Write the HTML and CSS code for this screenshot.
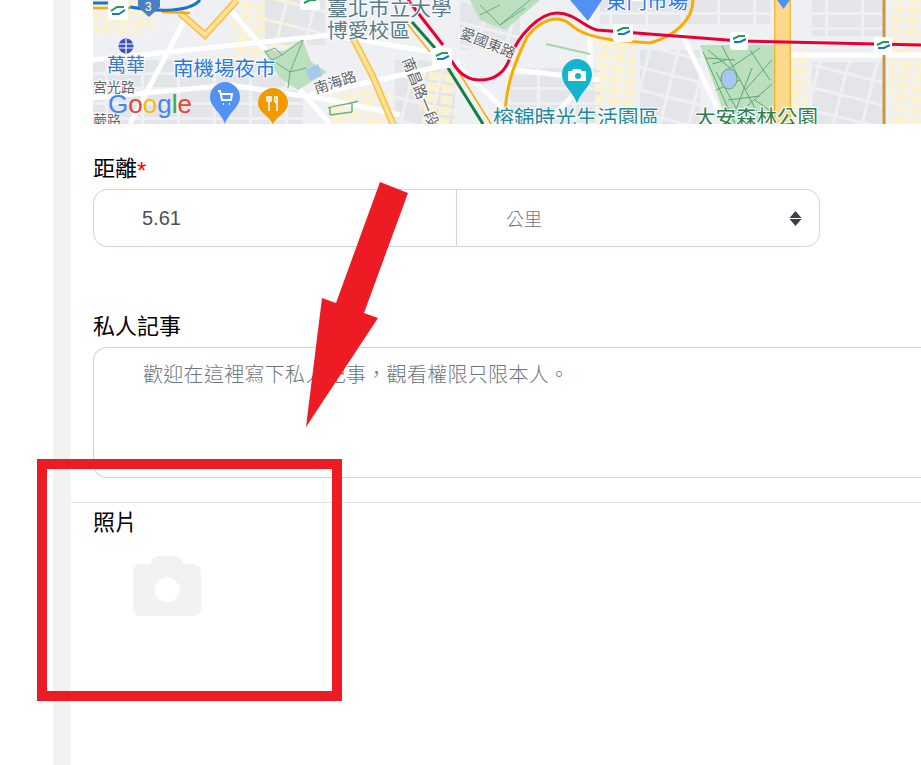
FILE: index.html
```html
<!DOCTYPE html>
<html>
<head>
  <meta charset="utf-8">
  <title>距離</title>
  <link rel="stylesheet" href="styles.css">
</head>
<body>
  <div class="page">
    <div class="strip"></div>
    <div class="main">
      <div class="upper">
        <svg class="map" width="828" height="124" viewBox="93 0 828 124">
          <defs>
            <pattern id="beige" width="15" height="11" patternUnits="userSpaceOnUse" patternTransform="rotate(8)">
              <rect width="12" height="8" fill="#fdf2d0"/>
            </pattern>
            <pattern id="beige2" width="17" height="10" patternUnits="userSpaceOnUse" patternTransform="rotate(-15)">
              <rect width="14" height="7" fill="#fdf2d0"/>
            </pattern>
            <pattern id="grey" width="36" height="15" patternUnits="userSpaceOnUse">
              <rect width="33" height="12" fill="#e3e5e9"/>
            </pattern>
            <pattern id="grey2" width="28" height="22" patternUnits="userSpaceOnUse" patternTransform="rotate(14)">
              <rect width="25" height="19" fill="#e3e5e9"/>
            </pattern>
          </defs>
          <rect x="93" y="0" width="828" height="124" fill="#eef0f3"/>
          <!-- blocks -->
          <rect x="93" y="60" width="210" height="64" fill="url(#grey)"/>
          <rect x="93" y="0" width="60" height="34" fill="url(#beige)"/>
          <rect x="232" y="0" width="65" height="60" fill="url(#beige)"/>
          <rect x="265" y="0" width="60" height="45" fill="url(#grey2)"/>
          <rect x="330" y="90" width="62" height="34" fill="url(#beige2)"/>
          <rect x="395" y="60" width="60" height="64" fill="url(#grey2)"/>
          <rect x="420" y="70" width="35" height="54" fill="url(#beige)"/>
          <rect x="460" y="0" width="60" height="50" fill="url(#grey2)"/>
          <rect x="510" y="68" width="90" height="56" fill="url(#grey)"/>
          <rect x="595" y="42" width="40" height="82" fill="url(#beige)"/>
          <rect x="640" y="50" width="60" height="74" fill="url(#grey2)"/>
          <rect x="600" y="0" width="170" height="24" fill="url(#grey)"/>
          <rect x="790" y="50" width="20" height="74" fill="url(#beige)"/>
          <rect x="812" y="0" width="70" height="36" fill="url(#grey)"/>
          <rect x="812" y="62" width="70" height="62" fill="url(#grey2)"/>
          <rect x="890" y="0" width="31" height="124" fill="url(#beige)"/>
          <!-- streets -->
          <g fill="none" stroke="#fff" stroke-width="5">
            <path d="M93 60L330 35L450 55"/>
            <path d="M93 98L230 85L330 100L400 115"/>
            <path d="M310 95L460 62"/>
            <path d="M230 10L330 124"/>
            <path d="M195 0L130 124"/>
            <path d="M500 68L600 80"/>
            <path d="M590 0V78L545 124"/>
            <path d="M680 30L725 124"/>
            <path d="M790 55H921"/>
            <path d="M430 40L520 124"/>
          </g>
          <!-- parks -->
          <path d="M263 50L284 51L303 40L311 62L327 72L298 90L280 78Z" fill="#bbdfbf"/>
          <path d="M306 70L318 64L322 76L310 80Z" fill="#a8c6f0"/>
          <path d="M265 52L275 48L282 55L272 60ZM282 55L302 40M290 72L303 40M272 60L290 72L306 68M290 72L288 88" fill="none" stroke="#69b07a"/>
          <path d="M700 45H775V124H728Z" fill="#bbdfbf"/>
          <path d="M708 50L730 68L760 48M716 72L745 124M752 68L735 112M772 60L745 90M703 52L735 124M772 84L745 108M722 46L757 112M735 60L706 58M716 90L740 80M750 50L770 80M728 100L760 96M712 64L726 60M755 100L772 112" fill="none" stroke="#5fa872"/>
          <ellipse cx="729" cy="79" rx="8" ry="10" fill="#a8c6f0" stroke="#5fa872"/>
          <path d="M328 108C340 104 352 104 358 101M330 115L352 112M330 108V115M352 104V112" fill="none" stroke="#6cb27c" stroke-width="1.500"/>
          <path d="M546 44L590 54" stroke="#a8d5ac" stroke-width="2"/>
          <path d="M470 0H540L505 30L480 20Z" fill="#bbdfbf"/>
          <path d="M480 5L500 25L530 0M500 5L480 15M500 25L525 8" fill="none" stroke="#69b07a"/>
          <!-- highways -->
          <g fill="none">
            <path d="M180 13L205 35L237 0" stroke="#f9bd4d" stroke-width="7"/>
            <path d="M180 13L205 35L237 0" stroke="#fde293" stroke-width="4"/>
            <path d="M93 8H130M162 12L190 13" stroke="#f9ab00" stroke-width="2.500"/>
            <path d="M93 3H118M130 7C160 12 190 12 200 0" stroke="#1976c8" stroke-width="3"/>
            <path d="M353 38L373 77L393 124" stroke="#f9bd4d" stroke-width="7"/>
            <path d="M353 38L373 77L393 124" stroke="#fde293" stroke-width="4"/>
            <path d="M775 0V124M790 0V124" stroke="#f9ab00" stroke-width="1.500"/>
            <path d="M782.500 0V124" stroke="#fdd98c" stroke-width="14"/>
            <path d="M884 0V124" stroke="#c8963e" stroke-width="3"/>
            <path d="M406 22L430 52" stroke="#f9ab00" stroke-width="1.500"/>
            <path d="M412 22L435 48" stroke="#0f8043" stroke-width="3"/>
            <path d="M448 68L483 124" stroke="#0f8043" stroke-width="3"/>
            <path d="M455 66L491 124" stroke="#f9ab00" stroke-width="1.500"/>
            <path d="M408 0L443 45" stroke="#e60033" stroke-width="3"/>
            <path d="M504 124C506 90 510 72 527 37C540 20 557 14 570 24C580 34 595 37 613 40L650 43C675 36 693 20 693 0" stroke="#f9ab00" stroke-width="3"/>
            <path d="M443 50L453 63C460 75 470 80 480 80C495 80 505 72 510 58C518 35 540 13 557 13C575 13 585 28 597 30L740 41L921 45" stroke="#e60033" stroke-width="3"/>
          </g>
          <!-- stations -->
          <g fill="#fff">
            <rect x="108" y="0" width="20" height="20" rx="3"/>
            <rect x="300" y="0" width="20" height="10" rx="3"/>
            <rect x="432" y="48" width="20" height="20" rx="3"/>
            <rect x="613" y="24" width="20" height="18" rx="3"/>
            <rect x="730" y="32" width="18" height="18" rx="3"/>
            <rect x="874" y="37" width="18" height="18" rx="3"/>
          </g>
          <g fill="none" stroke-width="2">
            <path d="M111 11L117 7H124" stroke="#1a9e5c"/><path d="M112 14H119L125 10" stroke="#1976c8"/>
            <path d="M436 56L442 53H448" stroke="#1a9e5c"/><path d="M437 59H443L449 56" stroke="#1976c8"/>
            <path d="M617 31L623 28H629" stroke="#1a9e5c"/><path d="M618 34H624L630 31" stroke="#1976c8"/>
            <path d="M733 39L739 36H745" stroke="#1a9e5c"/><path d="M734 42H740L746 39" stroke="#1976c8"/>
            <path d="M877 45L883 42H889" stroke="#1a9e5c"/><path d="M878 48H884L890 45" stroke="#1976c8"/>
            <path d="M304 3L310 0H316" stroke="#1a9e5c"/>
          </g>
          <!-- metro -->
          <circle cx="126" cy="46" r="7.500" fill="#3f51b5"/>
          <path d="M119 44H133M119 48H133M126 39V53" stroke="#fff" stroke-width="1.200"/>
          <path d="M138 0H160V7L149 17L138 7Z" fill="#4a7fc1"/>
          <!-- pins -->
          <path d="M225 82C233 82 240 89 240 97C240 107 229 112 225 124C221 112 210 107 210 97C210 89 217 82 225 82Z" fill="#5491f5"/>
          <path d="M218 91H220L222 100H231L232 94H221M223 104h1M229 104h1" fill="none" stroke="#fff" stroke-width="2"/>
          <path d="M273 88C281 88 288 95 288 103C288 112 277 116 273 124C269 116 258 112 258 103C258 95 265 88 273 88Z" fill="#f29900"/>
          <path d="M269 96V111M267 96V101H271V96M277 96V111M275 96C274 100 275 103 277 103" fill="none" stroke="#fff" stroke-width="1.600"/>
          <path d="M577 59C585 59 592 66 592 74C592 86 582 90 577 103C572 90 562 86 562 74C562 66 569 59 577 59Z" fill="#12b5cb"/>
          <path d="M568 71H572L573 69H580L582 71H586V81H568Z" fill="#fff"/>
          <circle cx="578" cy="76" r="3" fill="#12b5cb"/>
          <path d="M570 0H602L588 21Z" fill="#5491f5"/>
          <path d="M777 0H790L783.500 9Z" fill="#5491f5"/>
          <!-- labels -->
          <g class="map-label">
            <text x="107" y="72" font-size="19" fill="#3d78c2">萬華</text>
            <text x="173" y="76" font-size="20.500" fill="#2a78e4">南機場夜市</text>
            <text x="93" y="92" font-size="14" fill="#5f6368">宮光路</text>
            <text x="93" y="125" font-size="14" fill="#5f6368">蕨路</text>
            <text x="327" y="16" font-size="20.800" fill="#5b7b8c">臺北市立大學</text>
            <text x="327" y="38" font-size="20.800" fill="#5b7b8c">博愛校區</text>
            <text x="316" y="94" font-size="14.500" fill="#5f6368" transform="rotate(-18 316 94)">南海路</text>
            <text x="459" y="37" font-size="14.500" fill="#5f6368" transform="rotate(22 459 37)">愛國東路</text>
            <text x="402" y="60" font-size="14.500" fill="#5f6368" transform="rotate(68 402 60)">南昌路一段</text>
            <text x="493" y="125" font-size="20.800" fill="#1d8a9e">榕錦時光生活園區</text>
            <text x="695" y="125" font-size="20.500" fill="#2e7d4f">大安森林公園</text>
            <text x="606" y="9" font-size="20.500" fill="#2a78e4">東門市場</text>
          </g>
          <text class="map-logo" x="108" y="113" font-size="26"><tspan fill="#4285f4">G</tspan><tspan fill="#ea4335">o</tspan><tspan fill="#fbbc04">o</tspan><tspan fill="#4285f4">g</tspan><tspan fill="#34a853">l</tspan><tspan fill="#ea4335">e</tspan></text>
          <text class="map-logo map-num" x="145" y="11" font-size="12" fill="#fff">3</text>
        </svg>

        <div class="field field-distance">
          <div class="label">距離<span class="req">*</span></div>
          <div class="group">
            <div class="group-input">5.61</div>
            <div class="group-select">
              公里
              <svg class="updown" width="13" height="15" viewBox="0 0 13 15"><path d="M6.500 0L12.500 7H.5ZM6.500 15L.5 8H12.500Z" fill="#3b4148"/></svg>
            </div>
          </div>
        </div>

        <div class="field field-note">
          <div class="label">私人記事</div>
          <div class="textarea">歡迎在這裡寫下私人記事，觀看權限只限本人。</div>
        </div>
      </div>

      <div class="photos">
        <div class="label">照片</div>
        <svg class="camera" width="70" height="60" viewBox="0 0 70 60">
          <path fill-rule="evenodd" fill="#f2f2f2" d="M19 8C19 3 22 0 26 0H44C48 0 51 3 51 8H61C66 8 69 11 69 16V52C69 57 66 60 61 60H9C4 60 1 57 1 52V16C1 11 4 8 9 8ZM35 21.500A12.500 12.500 0 1 0 35 46.500A12.500 12.500 0 1 0 35 21.500Z"/>
        </svg>
      </div>
    </div>
  </div>

  <svg class="arrow" width="110" height="250" viewBox="0 0 110 250">
    <path d="M75 1L103 12L59 132L73 137L1 246L17 117L31 122Z" fill="#ed1c24"/>
  </svg>
  <div class="red-box"></div>
</body>
</html>
```

FILE: styles.css
```css
html, body {
  margin: 0;
  height: 100%;
  overflow: hidden;
}
body {
  background: #fff;
  font-family: "Liberation Sans", "Noto Sans CJK TC", sans-serif;
  color: #000;
}
.page {
  display: flex;
  height: 765px;
  padding-left: 53px;
}
.strip {
  width: 18px;
  background: #f2f2f2;
}
.main {
  flex: 1;
  min-width: 0;
}
.upper {
  padding-left: 22px;
}
.map {
  display: block;
}
.map-label {
  font-family: "Noto Sans CJK TC", sans-serif;
  paint-order: stroke;
  stroke: #fff;
  stroke-width: 2px;
}
.map-logo {
  font-family: "Liberation Sans", sans-serif;
}
.map-num {
  font-family: "Roboto", sans-serif;
}
.label {
  font-size: 22px;
  line-height: 28px;
  height: 28px;
  font-family: "Noto Sans CJK TC", sans-serif;
  font-weight: 400;
}
.req {
  color: #f00;
  font-size: 24px;
  line-height: 0;
  vertical-align: -3px;
  font-family: "Liberation Sans", sans-serif;
}
.field-distance {
  margin-top: 28px;
}
.group {
  display: flex;
  width: 727px;
  height: 58px;
  margin-top: 9px;
  box-sizing: border-box;
  border: 1px solid #ced4da;
  border-radius: 14px;
  font-size: 20px;
  line-height: 56px;
  color: #495057;
}
.group-input {
  box-sizing: border-box;
  width: 363px;
  padding-left: 48px;
  border-right: 1px solid #ced4da;
}
.group-select {
  flex: 1;
  display: flex;
  align-items: center;
  justify-content: space-between;
  padding: 0 17px 0 49px;
  font-family: "Noto Sans CJK TC", sans-serif;
  font-size: 18px;
  font-weight: 300;
  color: #6c757d;
}
.field-note {
  margin-top: 63px;
}
.textarea {
  height: 131px;
  margin-top: 9px;
  box-sizing: border-box;
  border: 1px solid #ced4da;
  border-right: 0;
  border-radius: 14px 0 0 14px;
  padding: 12px 0 0 49px;
  font-family: "Noto Sans CJK TC", sans-serif;
  font-size: 20px;
  font-weight: 300;
  letter-spacing: .3px;
  line-height: 28px;
  color: #6c757d;
}
.photos {
  margin-top: 24px;
  padding: 3px 0 0 22px;
  border-top: 1px solid #e3e3e3;
}
.camera {
  display: block;
  margin: 22px 0 0 39px;
}
.arrow {
  position: absolute;
  left: 305px;
  top: 181px;
}
.red-box {
  position: absolute;
  left: 37px;
  top: 459px;
  width: 285px;
  height: 222px;
  border: 10px solid #ed1c24;
}
```
